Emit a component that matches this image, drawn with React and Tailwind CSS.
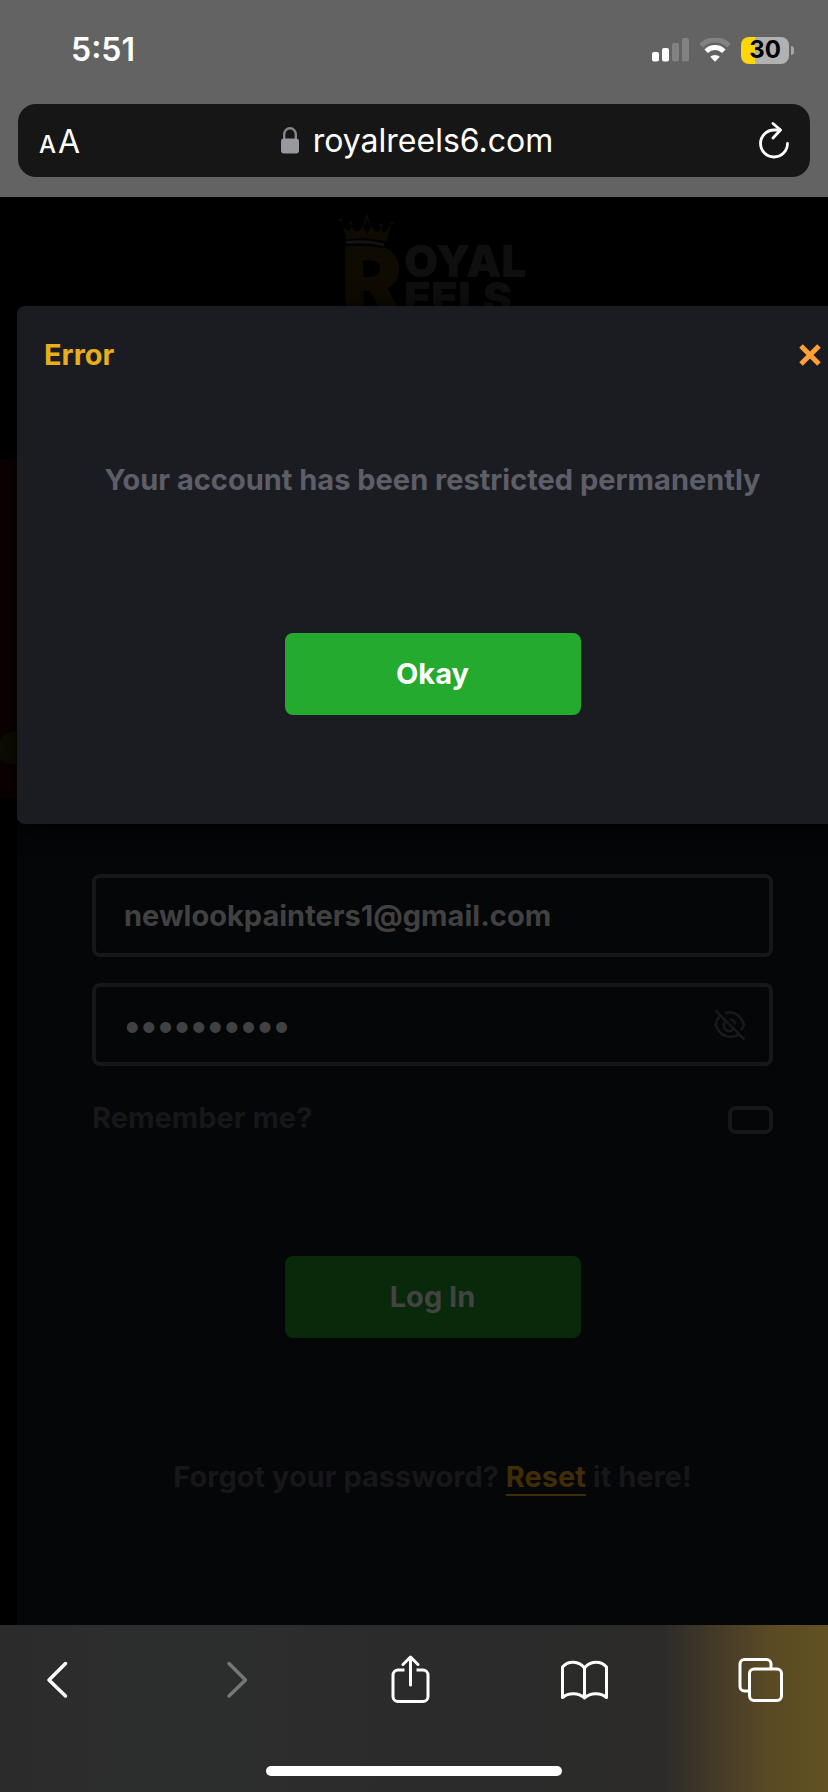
import React from "react";

function StatusBar() {
  return (
    <div className="flex h-[104px] items-center justify-between pl-[71px] pr-[34px] pb-1 text-white">
      <span className="text-[32px] leading-9 font-semibold">5:51</span>
      <div className="flex items-center gap-[10px]">
        <svg width="37" height="24" viewBox="0 0 37 24" aria-hidden="true">
          <rect x="0" y="14" width="7" height="9.5" rx="2" fill="#fff" />
          <rect x="10" y="10" width="7" height="13.5" rx="2" fill="#fff" />
          <rect x="20" y="5" width="7" height="18.5" rx="2" fill="#828282" />
          <rect x="30" y="0" width="7" height="23.5" rx="2" fill="#828282" />
        </svg>
        <svg width="32" height="24" viewBox="0 0 32 24" fill="none" aria-hidden="true">
          <path d="M2 7.6a20.2 20.2 0 0 1 28 0" stroke="#828282" strokeWidth="5" />
          <path d="M7.2 13.2a12.6 12.6 0 0 1 17.6 0" stroke="#fff" strokeWidth="5" />
          <path d="M11.2 18.8a7 7 0 0 1 9.6 0L16 23.8z" fill="#fff" />
        </svg>
        <div className="flex items-center gap-[2px]">
          <div className="flex h-[27px] w-12 items-center justify-center rounded-lg bg-linear-to-r from-[#ffd60a] from-30% to-[#b1b1b1] to-30% text-2xl leading-none font-bold text-black">
            30
          </div>
          <div className="h-[9px] w-[3px] rounded-r-full bg-[#a5a5a5]" />
        </div>
      </div>
    </div>
  );
}

function AddressBar() {
  return (
    <div className="mx-[18px] mb-5 flex h-[73px] items-center justify-between rounded-[18px] bg-[#161616] px-[21px] text-white">
      <button type="button" aria-label="Page settings" className="flex w-[46px] items-baseline gap-[2px] pt-[6px]">
        <span className="text-2xl leading-10 font-medium">A</span>
        <span className="text-[32px] leading-10">A</span>
      </button>
      <div className="flex items-center gap-[14px]">
        <svg width="18" height="27" viewBox="0 0 18 27" fill="none" aria-hidden="true">
          <path d="M3.2 13V7.5a5.8 6.3 0 0 1 11.6 0V13" stroke="#85858a" strokeWidth="2.4" />
          <rect x="0" y="11.5" width="18" height="15" rx="3" fill="#98989f" />
        </svg>
        <span className="text-[32px] leading-10">royalreels6.com</span>
      </div>
      <button type="button" aria-label="Reload" className="flex w-10 justify-end">
        <svg width="32" height="38" viewBox="0 0 32 38" fill="none" stroke="#fff" strokeWidth="2.8" strokeLinecap="round" strokeLinejoin="round" aria-hidden="true">
          <path d="M30.500 21.500a13.500 13.500 0 1 1-13.500-13.500h6" />
          <path d="M16 1.500l7.500 6.500-7.500 8" />
        </svg>
      </button>
    </div>
  );
}

function Logo() {
  return (
    <svg width="190" height="102" viewBox="0 0 190 102" role="img" aria-label="Royal Reels">
      <g fill="#0f0b02">
        <path d="M8 28C7 20 5 14 2 8c4 8 7 12 9.500 10.500C13.500 17 13 14 12.500 11c1.500 6 4 9 7.500 8 4-1 6-8 9-18 3 10 5 17 9 18.500 3.500 1 5-2.500 5.500-6.500 0 4 0 6 1.500 7 2.500 1 5-3 9-9-3 7-3.500 12-5 19-11-4-29-5-41-2zM29 7l-4 8 4 7 4-7z" fillRule="evenodd" />
        <circle cx="2.500" cy="8" r="1.800" />
        <circle cx="13" cy="11" r="1.800" />
        <circle cx="43" cy="13" r="1.800" />
        <circle cx="54" cy="11" r="1.800" />
        <text x="3" y="101" fontSize="92" fontWeight="900" fontFamily="Inter, sans-serif">R</text>
      </g>
      <path d="M8 31c13-1.500 26-1 38 2.500" fill="none" stroke="#000" strokeWidth="6" />
      <path d="M8 30.500c13-1.500 26-1 38 2.500" fill="none" stroke="#131314" strokeWidth="3" />
      <g fill="#0f0f10" fontSize="44" fontWeight="900" fontFamily="Inter, sans-serif">
        <text x="66" y="65">OYAL</text>
        <text x="66" y="102">EELS</text>
      </g>
    </svg>
  );
}

function EyeOffIcon() {
  return (
    <svg width="34" height="32" viewBox="0 0 34 32" fill="none" stroke="#19191b" strokeWidth="2.6" aria-hidden="true">
      <path d="M12 4.200c9-3 16 2.500 19 11.300a15 15 0 0 1-3.200 5.500" />
      <path d="M6.500 7.500A17 17 0 0 0 2.500 15.500c4 12.500 17 15.500 24.500 9" />
      <path d="M12.500 12.500a5.500 5.500 0 1 0 8 7.500" />
      <path d="M17 10.500a5 5 0 0 1 5 5" />
      <path d="M2.500 1.500l29 29" />
    </svg>
  );
}

function LoginForm() {
  return (
    <form
      onSubmit={(e) => e.preventDefault()}
      className="-mr-5 ml-[17px] flex flex-1 flex-col bg-[#050608] px-[75px] pt-[76px] text-[29px] leading-9 font-bold text-[#171719]"
    >
      <input
        type="email"
        aria-label="Email"
        defaultValue="newlookpainters1@gmail.com"
        className="h-[83px] w-full rounded-lg border-4 border-[#171719] bg-transparent px-7 text-[#414141] outline-none"
      />
      <div className="mt-[26px] flex h-[83px] items-center rounded-lg border-4 border-[#171719] pr-[22px] pl-7">
        <input
          type="password"
          aria-label="Password"
          defaultValue="abcdefghij"
          className="min-w-0 flex-1 bg-transparent text-[35px] text-[#414141] outline-none"
        />
        <button type="button" aria-label="Show password">
          <EyeOffIcon />
        </button>
      </div>
      <div className="mt-[34px] flex items-center justify-between">
        <label htmlFor="remember">Remember me?</label>
        <input
          id="remember"
          type="checkbox"
          className="mt-1 h-7 w-[45px] appearance-none rounded-lg border-4 border-[#171719]"
        />
      </div>
      <button type="submit" className="mt-[120px] h-[82px] w-[296px] self-center rounded-lg bg-[#09290b] text-[#434343]">
        Log In
      </button>
      <p className="mt-[121px] text-center">
        Forgot your password?{" "}
        <a href="#reset" className="border-b-2 border-[#402c07] text-[#402c07]">
          Reset
        </a>{" "}
        it here!
      </p>
    </form>
  );
}

function ErrorDialog() {
  return (
    <div
      role="alertdialog"
      aria-labelledby="error-title"
      aria-describedby="error-text"
      className="absolute top-[109px] -right-5 left-[17px] flex flex-col rounded-lg bg-[#1b1c21] pt-[31px] pb-[109px] text-[29px] leading-9 font-bold shadow-[0_4px_24px_#000]"
    >
      <div className="flex items-center justify-between pr-[26px] pl-[27px]">
        <h2 id="error-title" className="text-[#e8ae1b]">Error</h2>
        <button type="button" aria-label="Close">
          <svg width="24" height="24" viewBox="0 0 24 24" stroke="#ff9f35" strokeWidth="5" aria-hidden="true">
            <path d="M3 3l18 18M21 3L3 21" />
          </svg>
        </button>
      </div>
      <p id="error-text" className="mt-[89px] text-center text-[#5d5e68]">
        Your account has been restricted permanently
      </p>
      <button type="button" className="mt-[135px] h-[82px] w-[296px] self-center rounded-lg bg-[#23aa2f] text-white">
        Okay
      </button>
    </div>
  );
}

function ToolbarIcon({ label, dim, children }) {
  return (
    <button type="button" aria-label={label} className={dim ? "text-[#757676]" : "text-white"}>
      <svg width="48" height="48" viewBox="0 0 48 48" fill="none" stroke="currentColor" strokeWidth="3" strokeLinecap="round" strokeLinejoin="round" aria-hidden="true">
        {children}
      </svg>
    </button>
  );
}

function Toolbar() {
  return (
    <footer className="flex flex-col bg-[linear-gradient(to_right,#2b2b2b,#2c2e2d_20%,#2b2b2b_50%,#2c2b2a_80%,#463b28_87%,#5a4a24_93%,#625123)] pt-[30px] pb-4">
      <nav className="flex justify-between pr-11 pl-[33px]">
        <ToolbarIcon label="Back">
          <path d="M32.500 8.500L16 25l16.500 16" strokeWidth="3.500" />
        </ToolbarIcon>
        <ToolbarIcon label="Forward" dim>
          <path d="M20 8.500L36.500 25 20 41" strokeWidth="3.500" />
        </ToolbarIcon>
        <ToolbarIcon label="Share">
          <path d="M19.500 15H13a5 5 0 0 0-5 5v21.500a5 5 0 0 0 5 5h25a5 5 0 0 0 5-5V20a5 5 0 0 0-5-5h-6.500" strokeLinecap="butt" />
          <path d="M25.500 30V2.500M18 9.500l7.500-7.500 7.500 7.500" />
        </ToolbarIcon>
        <ToolbarIcon label="Bookmarks">
          <path d="M24.500 13C19 5.500 8 5.500 2.500 12v30.500c6-5 16-5 22 .500 6-5.500 16-5.500 22-.500V12c-5.500-6.500-16.500-6.500-22 1zM24.500 13v30" />
        </ToolbarIcon>
        <ToolbarIcon label="Tabs">
          <path d="M13 36H8.500A4.500 4.500 0 0 1 4 31.500V9a4.500 4.500 0 0 1 4.500-4.500h22A4.500 4.500 0 0 1 35 9v4.500" />
          <rect x="13.500" y="14" width="32" height="31.500" rx="4.500" />
        </ToolbarIcon>
      </nav>
      <div className="mt-[63px] h-[10px] w-[296px] self-center rounded-full bg-white" />
    </footer>
  );
}

export default function App() {
  return (
    <div className="flex min-h-screen flex-col bg-black font-['Inter',sans-serif]">
      <header className="bg-[#636363]">
        <StatusBar />
        <AddressBar />
      </header>
      <main className="relative flex flex-1 flex-col overflow-hidden">
        <div className="-mr-5 ml-[17px] flex h-[262px] items-start justify-center pt-[15px]">
          <Logo />
        </div>
        <div className="flex h-[339px] items-end bg-[#0d0102] pb-[31px]">
          <svg width="30" height="38" viewBox="0 0 30 38" aria-hidden="true">
            <path d="M0 12C4 4 12 1 30 0v38C14 36 5 35 0 30z" fill="#0e0e03" />
          </svg>
        </div>
        <LoginForm />
        <ErrorDialog />
      </main>
      <Toolbar />
    </div>
  );
}
